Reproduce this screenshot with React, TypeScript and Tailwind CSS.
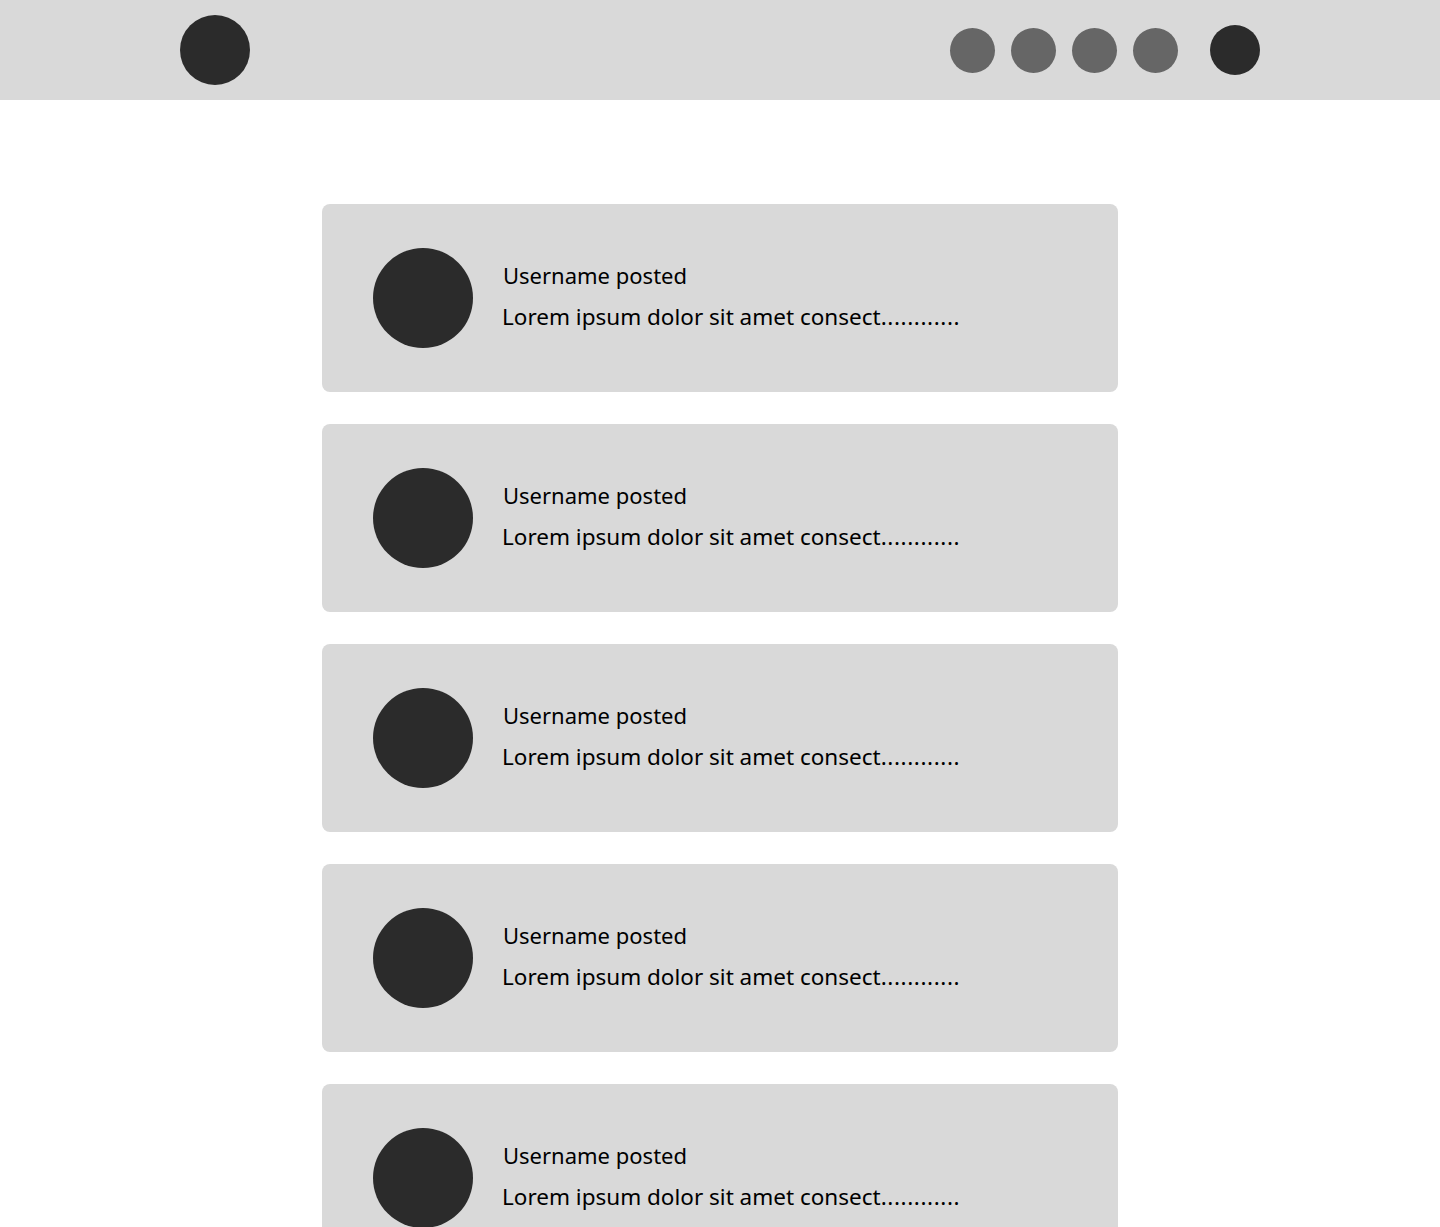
const POSTS = [1, 2, 3, 4, 5];

function Header() {
  return (
    <header className="h-[100px] bg-[#d9d9d9] flex items-center justify-between px-[180px]">
      <div className="h-[70px] w-[70px] rounded-full bg-[#2b2b2b]" />
      <div className="flex items-center">
        <nav className="flex items-center gap-4">
          {[0, 1, 2, 3].map((i) => (
            <div key={i} className="h-[45px] w-[45px] rounded-full bg-[#666666]" />
          ))}
        </nav>
        <div className="ml-8 h-[50px] w-[50px] rounded-full bg-[#2b2b2b]" />
      </div>
    </header>
  );
}

function PostCard() {
  return (
    <div className="h-[188px] rounded-lg bg-[#d9d9d9] flex items-center pl-[51px]">
      <div className="h-[100px] w-[100px] shrink-0 rounded-full bg-[#2b2b2b]" />
      <div className="ml-[30px] -mt-1 flex flex-col gap-[12px] leading-[30px] text-black font-['Noto_Sans',sans-serif]">
        <p className="text-[22px]">Username posted</p>
        <p className="-ml-px text-[22.5px]">
          Lorem ipsum dolor sit amet consect
          <span className="tracking-[0.6px]">............</span>
        </p>
      </div>
    </div>
  );
}

export default function App() {
  return (
    <div className="min-h-screen bg-white font-['Open_Sans',sans-serif]">
      <Header />
      <main className="mx-auto mt-[104px] w-[796px] flex flex-col gap-8">
        {POSTS.map((p) => (
          <PostCard key={p} />
        ))}
      </main>
    </div>
  );
}
